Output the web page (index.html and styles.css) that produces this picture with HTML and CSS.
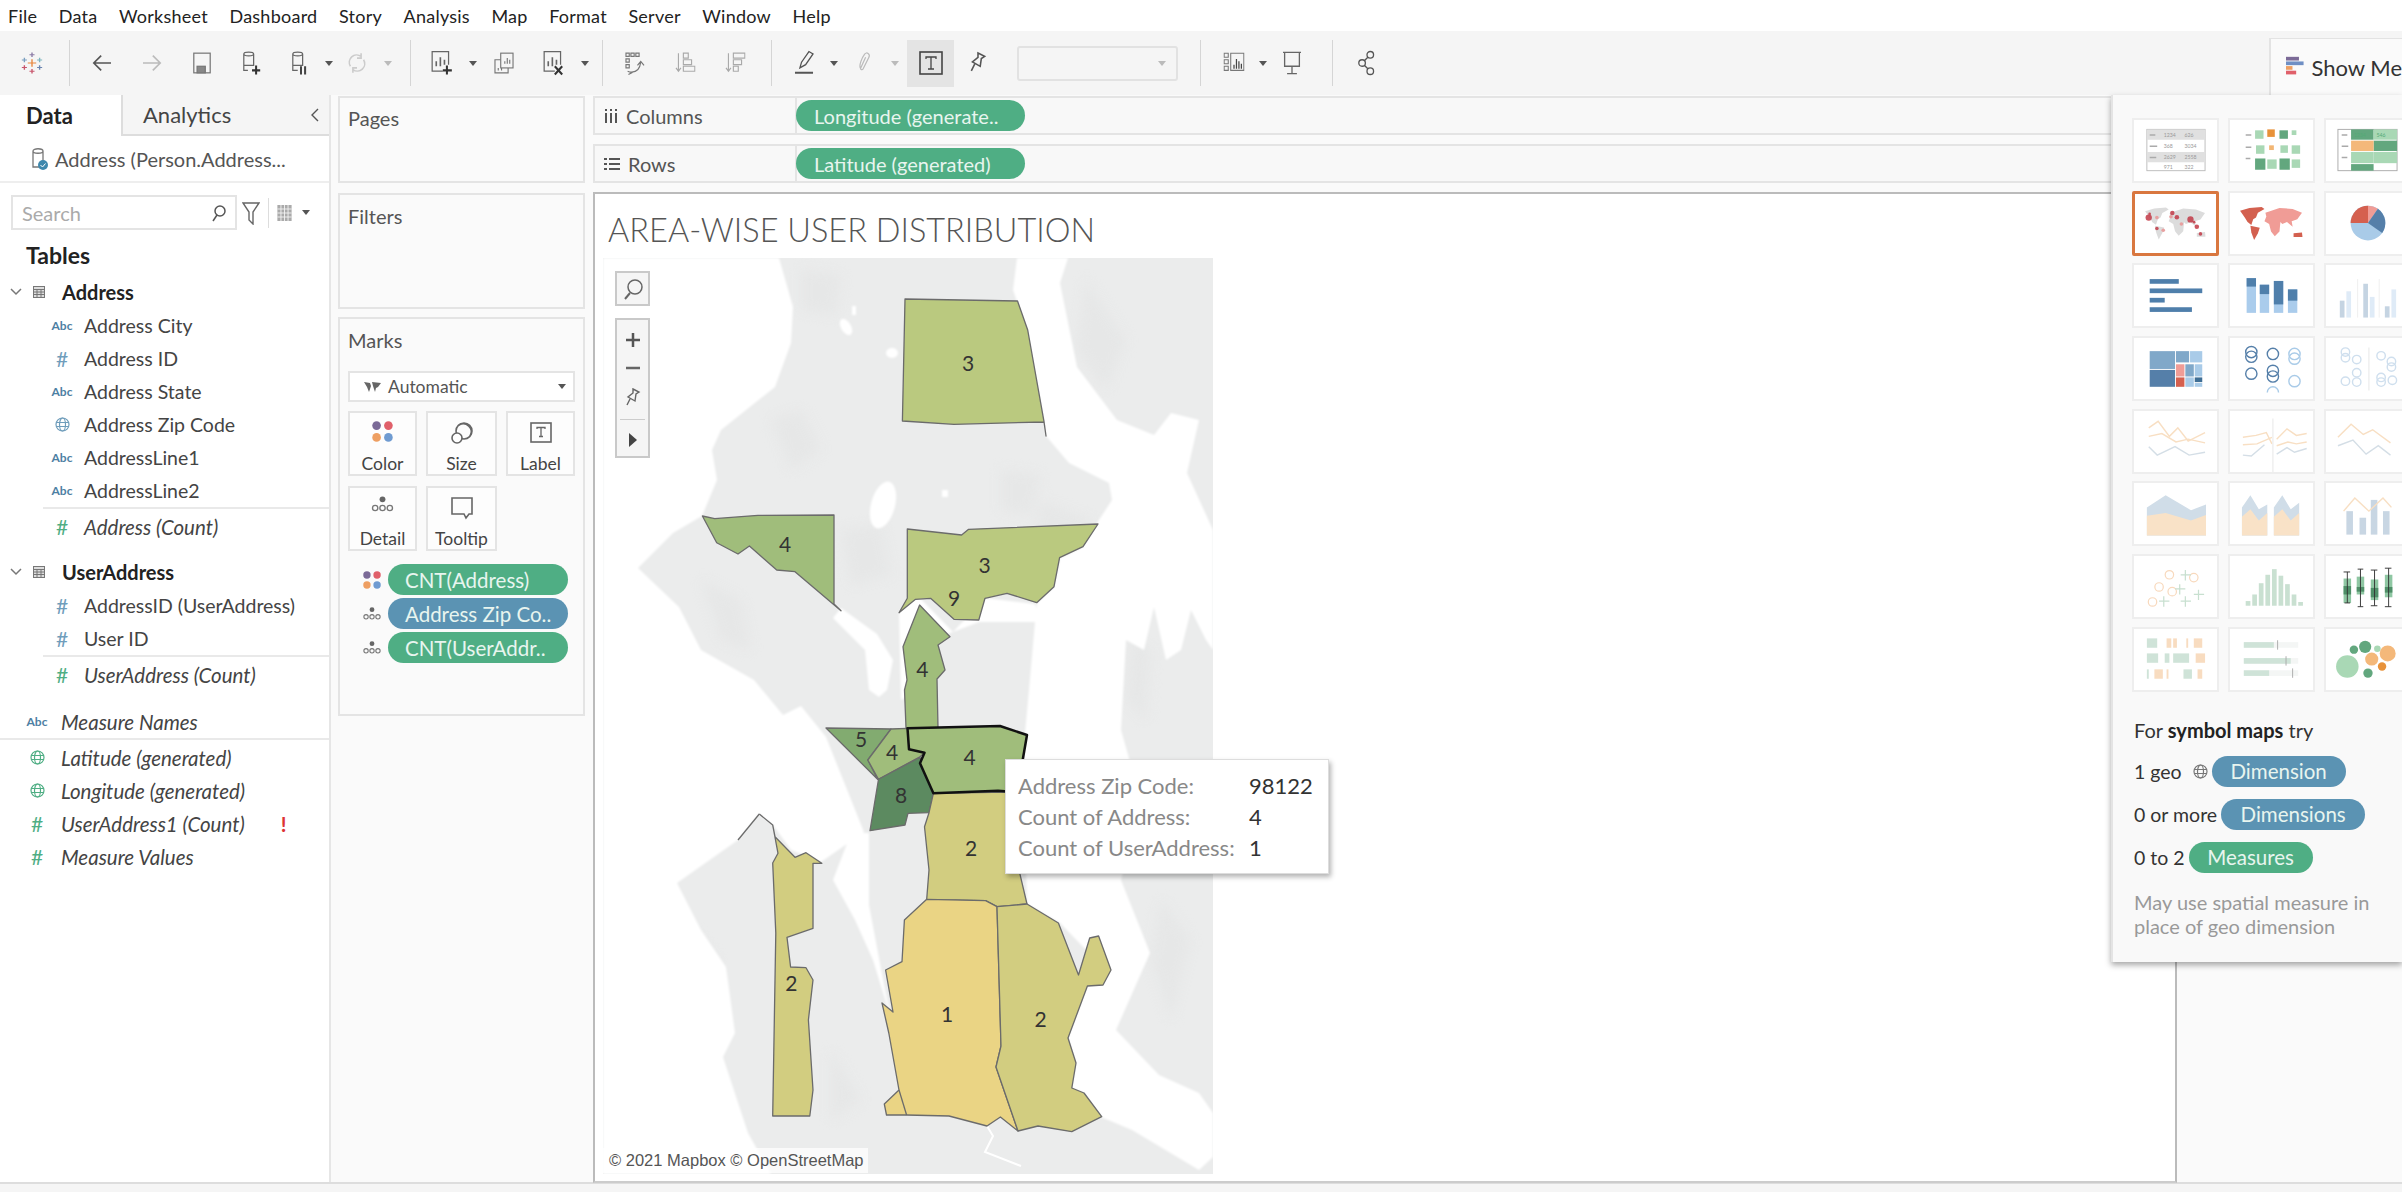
FILE: index.html
```html
<!DOCTYPE html>
<html lang="en">
<head>
<meta charset="utf-8">
<title>Tableau worksheet</title>
<link rel="stylesheet" href="styles.css">
</head>
<body>
<svg class="defs" width="0" height="0">
  <defs>
    <g id="detail"><circle cx="8" cy="2.5" r="2.2" fill="#666"/><g fill="none" stroke="#777"><circle cx="2.5" cy="9" r="2"/><circle cx="8" cy="9" r="2"/><circle cx="13.5" cy="9" r="2"/></g></g>
    <g id="dots"><circle cx="3.5" cy="3.5" r="3.3" fill="#7b6a97"/><circle cx="12.5" cy="3.5" r="3.3" fill="#e0606a"/><circle cx="3.5" cy="12.5" r="3.3" fill="#ee9f62"/><circle cx="12.5" cy="12.5" r="3.3" fill="#6f9bd1"/></g>
    <g id="globe" fill="none" stroke="currentColor" stroke-width="1.2"><circle cx="7.5" cy="7.5" r="6.5"/><ellipse cx="7.5" cy="7.5" rx="3" ry="6.5"/><path d="M1 5.5h13M1 9.5h13"/></g>
    <g id="tbl" fill="none" stroke="#777"><rect x=".5" y=".5" width="11" height="11" fill="#ddd"/><path d="M.5 3.5h11M.5 6h11M.5 8.5h11M4 3.5v8M8 3.5v8"/></g>
    <g id="pin" fill="none" stroke="currentColor" stroke-width="1.4"><path d="M9 1l6 3-3 2-1 7-7-4 5-4zM6 11l-3 6"/></g>
    <path id="na" d="M10 19L20 16 33 15 36 17 29 21 27 26 24 28 22 34 18 31 15 26Z"/>
    <path id="sa" d="M21 35L31 37 29 43 25 50 22 42Z"/>
    <path id="ea" d="M37 21L52 16 66 17 76 21 71 28 65 30 66 36 60 31 55 33 53 31 52 41 47 46 43 41 41 33 36 30 38 25Z"/>
    <path id="au" d="M67 43L76 42 76.500 47 67 47Z"/>
  </defs>
</svg>

<nav class="menubar">
  <span>File</span><span>Data</span><span>Worksheet</span><span>Dashboard</span><span>Story</span><span>Analysis</span><span>Map</span><span>Format</span><span>Server</span><span>Window</span><span>Help</span>
</nav>

<header class="toolbar">
  <div class="tg g1">
    <svg class="logo" width="22" height="24" viewBox="0 0 26 32" preserveAspectRatio="none"><g stroke-width="1.600" fill="none"><path d="M13 11v10M8 16h10" stroke="#e8863d"/><path d="M13 2v6M10 5h6" stroke="#8a7aa5"/><path d="M13 24v6M10 27h6" stroke="#c8546b"/><path d="M4 9v6M1 12h6" stroke="#7a9fc0"/><path d="M22 9v6M19 12h6" stroke="#7fb5c0"/><path d="M4 19v6M1 22h6" stroke="#c8546b"/><path d="M22 19v6M19 22h6" stroke="#6a84b0"/></g></svg>
  </div>
  <div class="tg g2">
    <span class="ti"><svg width="26" height="24" viewBox="0 0 26 24" fill="none" stroke="#555" stroke-width="2"><path d="M24 12H3M12 3l-9 9 9 9"/></svg></span>
    <span class="ti"><svg width="26" height="24" viewBox="0 0 26 24" fill="none" stroke="#bbb" stroke-width="2"><path d="M2 12h21M14 3l9 9-9 9"/></svg></span>
    <span class="ti"><svg width="24" height="28" viewBox="0 0 24 28" fill="none" stroke="#777" stroke-width="1.5"><rect x="2" y="2" width="20" height="24"/><rect x="6" y="18" width="10" height="8" fill="#888"/></svg></span>
    <span class="ti"><svg width="26" height="30" viewBox="0 0 26 30" fill="none" stroke="#666" stroke-width="1.5"><path d="M3 4c0-3 12-3 12 0v14H3zM3 4c0 3 12 3 12 0M8 24H3v-6"/><path d="M18 18v11M13 24h10" stroke="#333" stroke-width="2.5"/></svg></span>
    <span class="ti ti48"><svg width="26" height="30" viewBox="0 0 26 30" fill="none" stroke="#666" stroke-width="1.5"><path d="M3 4c0-3 12-3 12 0v14H3zM3 4c0 3 12 3 12 0M9 24H3v-6"/><path d="M13 19v10M18 19v10" stroke="#444" stroke-width="2.5"/></svg></span>
    <span class="dd dd8"></span>
    <span class="ti ti48"><svg width="24" height="28" viewBox="0 0 24 28" fill="none" stroke="#ccc" stroke-width="2"><path d="M4 18A9 9 0 0 1 17 6M20 10a9 9 0 0 1-13 12M17 2v6h-5M7 26v-6h5"/></svg></span>
    <span class="dd dd14 off"></span>
  </div>
  <div class="tg g3">
    <span class="ti"><svg width="28" height="32" viewBox="0 0 28 32" fill="none" stroke="#666" stroke-width="1.5"><path d="M15 26H2V2h20v16"/><path d="M7 20v-6M12 20V9M17 18v-6" stroke-width="2"/><path d="M20 19v11M15 25h11" stroke="#333" stroke-width="2.5"/></svg></span>
    <span class="dd dd12"></span>
    <span class="ti"><svg width="26" height="28" viewBox="0 0 26 28" fill="none" stroke="#777" stroke-width="1.4"><rect x="9" y="2" width="15" height="18"/><path d="M9 10H2v16h16v-6"/><path d="M14 15v-3M17 15V8M20 15v-5M6 23v-3M10 23v-3"/></svg></span>
    <span class="ti"><svg width="28" height="32" viewBox="0 0 28 32" fill="none" stroke="#666" stroke-width="1.5"><path d="M15 26H2V2h20v16"/><path d="M7 20v-6M12 20V9M17 18v-6" stroke-width="2"/><path d="M15 20l9 10M24 20l-9 10" stroke="#333" stroke-width="2.5"/></svg></span>
    <span class="dd dd12"></span>
  </div>
  <div class="tg g4">
    <span class="ti"><svg width="26" height="30" viewBox="0 0 26 30" fill="none" stroke="#777" stroke-width="1.4"><path d="M2 3h4v4H2zM8 3h4v4H8zM14 3h4v4h-4zM2 10h4v4H2zM2 17h4v4H2zM7 26c8 1 12-4 13-12M16 18l4-5 4 5M4 25l5 2-4 2"/></svg></span>
    <span class="ti"><svg width="26" height="30" viewBox="0 0 26 30" fill="none" stroke="#aaa" stroke-width="1.4"><path d="M5 3v22M2 21l3 4 3-4M11 3h6v6h-6zM11 11h10v6H11zM11 19h14v6H11z"/></svg></span>
    <span class="ti"><svg width="26" height="30" viewBox="0 0 26 30" fill="none" stroke="#aaa" stroke-width="1.4"><path d="M5 3v22M2 21l3 4 3-4M11 3h14v6H11zM11 11h10v6H11zM11 19h6v6h-6z"/></svg></span>
  </div>
  <div class="tg g5">
    <span class="ti"><svg width="26" height="32" viewBox="0 0 26 32" fill="none" stroke="#555" stroke-width="1.6"><path d="M8 22l2-7 9-13 5 3-9 13z"/><path d="M2 28h22" stroke-width="2.4"/></svg></span>
    <span class="dd dd10"></span>
    <span class="ti"><svg width="18" height="30" viewBox="0 0 18 30" fill="none" stroke="#bbb" stroke-width="1.5"><path d="M5 22c-3-4 2-14 5-18 2-3 7 0 5 4l-7 14c-1 2-4 1-3-1l6-13"/></svg></span>
    <span class="dd dd12 off"></span>
    <span class="tbtn"><svg width="24" height="26" viewBox="0 0 24 26" fill="none" stroke="#444" stroke-width="1.6"><rect x="1" y="2" width="22" height="22"/><path d="M7 9V7h10v2M12 7v12M9 19h6" stroke-width="1.3"/></svg></span>
    <span class="tpin"><svg width="20" height="30" viewBox="0 0 18 20" color="#555"><use href="#pin"/></svg></span>
    <span class="tselect"><i class="dd dd8 off"></i></span>
  </div>
  <div class="tg g6">
    <span class="ti"><svg width="26" height="28" viewBox="0 0 26 28" fill="none" stroke="#777" stroke-width="1.3"><path d="M1 2h5v5H1zM1 10h5v5H1zM1 18h5v5H1zM9 2h16v21H9z"/><path d="M13 21v-5M16 21V9M19 21v-9M22 21v-6" stroke="#444" stroke-width="1.5"/></svg></span>
    <span class="dd dd8"></span>
    <span class="ti"><svg width="24" height="30" viewBox="0 0 24 30" fill="none" stroke="#666" stroke-width="1.6"><path d="M1 2h22M3 2v17h18V2M12 19v9M6 28h12"/></svg></span>
  </div>
  <div class="tg g7">
    <span class="ti"><svg width="22" height="32" viewBox="0 0 22 32" fill="none" stroke="#555" stroke-width="1.6"><circle cx="15" cy="6" r="4"/><circle cx="5" cy="16" r="4"/><circle cx="15" cy="26" r="4"/><path d="M12 9l-4 4M8 19l4 4"/></svg></span>
  </div>
  <div class="showtab">
    <svg width="20" height="22" viewBox="0 0 20 22"><rect width="14" height="4" fill="#7b6a97"/><rect y="5" width="19" height="4" fill="#6f8fc4"/><rect y="10" width="7" height="4" fill="#ee9f62"/><rect y="15" width="11" height="4" fill="#e0606a"/></svg>
    <span>Show Me</span>
  </div>
</header>

<main class="main">
  <aside class="left">
    <div class="tabs">
      <div class="tab tab-on">Data</div>
      <div class="tab tab-off">Analytics<svg class="chev" width="8" height="14" viewBox="0 0 8 14" fill="none" stroke="#555" stroke-width="1.4"><path d="M7 1L1 7l6 6"/></svg></div>
    </div>
    <div class="source">
      <svg width="18" height="24" viewBox="0 0 18 24"><g fill="none" stroke="#777" stroke-width="1.3"><path d="M2 4c0-3 10-3 10 0v16H2zM2 4c0 3 10 3 10 0"/></g><circle cx="12" cy="18" r="5" fill="#3f88ad"/><path d="M9.500 18l2 2 3-3.500" stroke="#fff" fill="none"/></svg>
      <span>Address (Person.Address...</span>
    </div>
    <div class="searchrow">
      <div class="search"><span>Search</span><svg width="14" height="18" viewBox="0 0 14 18" fill="none" stroke="#555" stroke-width="1.5"><circle cx="8" cy="7" r="5"/><path d="M5 11l-4 6"/></svg></div>
      <svg class="funnel" width="18" height="24" viewBox="0 0 18 24" fill="none" stroke="#666" stroke-width="1.4"><path d="M1 2h16l-6 9v12l-4-4v-8z"/></svg>
      <i class="vsep"></i>
      <svg class="gridic" width="15" height="16" viewBox="0 0 16 18"><path d="M0 0h16v18H0z" fill="#aaa"/><path d="M4 0v18M8 0v18M12 0v18M0 4.500h16M0 9h16M0 13.500h16" stroke="#f4f4f4"/></svg>
      <i class="ddg"></i>
    </div>
    <h2 class="tables">Tables</h2>

    <div class="group"><svg width="12" height="8" viewBox="0 0 12 8" fill="none" stroke="#777" stroke-width="1.5"><path d="M1 1l5 5 5-5"/></svg><svg width="12" height="12" viewBox="0 0 12 12"><use href="#tbl"/></svg><b>Address</b></div>
    <div class="field"><i class="ic abc">Abc</i>Address City</div>
    <div class="field"><i class="ic hash">#</i>Address ID</div>
    <div class="field"><i class="ic abc">Abc</i>Address State</div>
    <div class="field"><i class="ic glb"><svg width="15" height="15" viewBox="0 0 15 15"><use href="#globe"/></svg></i>Address Zip Code</div>
    <div class="field"><i class="ic abc">Abc</i>AddressLine1</div>
    <div class="field"><i class="ic abc">Abc</i>AddressLine2</div>
    <hr class="rule">
    <div class="field em"><i class="ic hash grn">#</i>Address (Count)</div>

    <div class="group g-second"><svg width="12" height="8" viewBox="0 0 12 8" fill="none" stroke="#777" stroke-width="1.5"><path d="M1 1l5 5 5-5"/></svg><svg width="12" height="12" viewBox="0 0 12 12"><use href="#tbl"/></svg><b>UserAddress</b></div>
    <div class="field"><i class="ic hash">#</i>AddressID (UserAddress)</div>
    <div class="field"><i class="ic hash">#</i>User ID</div>
    <hr class="rule">
    <div class="field em"><i class="ic hash grn">#</i>UserAddress (Count)</div>

    <div class="field em mfield mfirst"><i class="ic abc">Abc</i>Measure Names</div>
    <hr class="rule rule-m">
    <div class="field em mfield"><i class="ic glb grn"><svg width="15" height="15" viewBox="0 0 15 15"><use href="#globe"/></svg></i>Latitude (generated)</div>
    <div class="field em mfield"><i class="ic glb grn"><svg width="15" height="15" viewBox="0 0 15 15"><use href="#globe"/></svg></i>Longitude (generated)</div>
    <div class="field em mfield"><i class="ic hash grn">#</i>UserAddress1 (Count)<b class="bang">!</b></div>
    <div class="field em mfield"><i class="ic hash grn">#</i>Measure Values</div>
  </aside>

  <section class="cards">
    <div class="card pages"><h3>Pages</h3></div>
    <div class="card filters"><h3>Filters</h3></div>
    <div class="card marks">
      <h3>Marks</h3>
      <div class="marktype">
        <svg width="18" height="12" viewBox="0 0 18 12" fill="#666"><path d="M0 1l6 1 1 3-2 6-2-5zM8 1l9 1-3 4-2 1-1 4-2-6z"/></svg>
        <span>Automatic</span><i class="ddg"></i>
      </div>
      <div class="mbtns">
        <div class="mbtn"><svg width="21" height="21" viewBox="0 0 16 16"><use href="#dots"/></svg><span>Color</span></div>
        <div class="mbtn"><svg width="24" height="24" viewBox="0 0 24 24" fill="none" stroke="#666" stroke-width="1.6"><circle cx="14" cy="10" r="8"/><circle cx="7" cy="17" r="5" fill="#fff"/><path d="M9 4a8 8 0 0 1 11 11"/></svg><span>Size</span></div>
        <div class="mbtn"><svg width="24" height="24" viewBox="0 0 24 24" fill="none" stroke="#666" stroke-width="1.6"><rect x="2" y="2" width="20" height="19"/><path d="M8 8V6.500h8V8M12 6.500v9M10 15.500h4" stroke-width="1.300"/></svg><span>Label</span></div>
        <div class="mbtn"><svg width="25" height="16" viewBox="0 0 16 12"><use href="#detail"/></svg><span>Detail</span></div>
        <div class="mbtn"><svg width="24" height="24" viewBox="0 0 24 24" fill="none" stroke="#666" stroke-width="1.6"><path d="M2 2h20v16h-3l-3 4-2-4H2z"/></svg><span>Tooltip</span></div>
      </div>
      <div class="mpills">
        <div class="mrow"><svg width="18" height="18" viewBox="0 0 16 16"><use href="#dots"/></svg><span class="pill green">CNT(Address)</span></div>
        <div class="mrow"><svg width="18" height="13" viewBox="0 0 16 12"><use href="#detail"/></svg><span class="pill blue">Address Zip Co..</span></div>
        <div class="mrow"><svg width="18" height="13" viewBox="0 0 16 12"><use href="#detail"/></svg><span class="pill green">CNT(UserAddr..</span></div>
      </div>
    </div>
  </section>

  <section class="work">
    <div class="shelf"><div class="shelf-l"><svg width="14" height="14" viewBox="0 0 14 14" stroke="#555" stroke-width="2"><path d="M2 4v10M7 4v10M12 4v10M2 0v2M7 0v2M12 0v2"/></svg>Columns</div><span class="pill green shelfpill">Longitude (generate..</span></div>
    <div class="shelf"><div class="shelf-l"><svg width="16" height="14" viewBox="0 0 16 14" stroke="#555" stroke-width="2"><path d="M5 2h11M5 7h11M5 12h11M0 2h3M0 7h3M0 12h3"/></svg>Rows</div><span class="pill green shelfpill">Latitude (generated)</span></div>
    <div class="view">
      <h1>AREA-WISE USER DISTRIBUTION</h1>
      <div class="map">
        <svg class="mapsvg" width="610" height="916" viewBox="602 258 610 916">
          <rect x="602" y="258" width="610" height="916" fill="#ebecec"/>
          <g class="blotch" fill="#e6e7e7">
            <path d="M800 270l40 5-5 40-35-5zM770 420l30-10 20 40-30 20zM1085 280l40 60-20 50-30-40zM1040 500l50 20-20 50-40-20zM840 530l40-5 10 50-40 10zM700 580l40 20 10 50-30-10zM1000 470l40 5-10 40-30-5zM690 930l25 30-5 40-20-30zM1160 900l30 40-20 80-20-60zM830 1050l30 50-30 20zM1130 640l20 10-5 70-20-20z"/>
          </g>
          <g class="land" fill="#fff">
            <path d="M602 258H778L792 307 790 343 774 387 720 430 711 450 716 480 701 516 672 533 637 568 678 607 700 650 753 680 782 715 800 706 825 737 863 832 820 862 790 850 772 825 758 814 737 840 676 883 700 930 725 967 734 1033 722 1057 747 1133 770 1174H602Z"/>
            <path d="M1016 258L1012 290 1026 330 1043 422 1045 436 1068 463 1108 483 1111 500 1096 523 1082 547 1059 558 1053 587 1036 603 1034 622 1028 690 1024 733 1022 780 1026 904 1059 923 1090 955 1109 967 1086 987 1067 1038 1075 1063 1071 1088 1083 1093 1100 1117 1131 1130 1198 1170 1212 1157V1113L1198 1093 1158 1075 1115 1030 1149 953 1120 880 1140 800 1120 730 1125 640 1143 650 1153 607 1165 660 1180 650 1190 610 1205 640 1212 650V530L1186 473 1198 420 1170 413 1153 435 1116 420 1076 367 1059 283 1067 258Z"/>
            <path d="M840 608L876 634 892 660 886 690 878 697 868 690 864 650 832 618ZM898 612L916 595 952 632 978 622 1040 622 1034 604 984 598 952 632 930 640 920 690 900 700Z"/>
            <path d="M832 880L850 833 868 833 868 905 884 990 892 1025 872 960 854 920Z"/>
            <ellipse cx="882" cy="505" rx="12" ry="24" transform="rotate(15 882 505)"/>
            <ellipse cx="845" cy="327" rx="5" ry="9" transform="rotate(-30 845 327)"/>
            <ellipse cx="891" cy="353" rx="6" ry="5"/>
            <rect x="941" y="490" width="6" height="7"/>
            <rect x="851" y="306" width="4" height="9"/>
          </g>
          <path d="M986 1126l6 10-8 16 36 14" fill="none" stroke="#fff" stroke-width="2"/>
          <g stroke="#6b6b6b" stroke-width="1.300" stroke-linejoin="round">
            <path fill="#bac97f" d="M904 299L1016.500 301 1026.700 330 1043 421.700 1045 436 1043 422 953 424.300 901.400 421Z"/>
            <path fill="#a0bd7b" d="M701.400 516L713.700 518.700 757 515.300 833 515 833 604 840 610.700 794 571.700 775.700 570 748.400 546 737 554 715.700 542.700Z"/>
            <path fill="#bac97f" d="M906.300 529L960.600 535 967.600 529.300 1097 524 1082 546.700 1058.600 557.700 1053 586.700 1035.700 602.700 1006 593.300 984 598.300 977.800 620 953 619.300 929.600 598.300 914.500 599.300 898 612.700 906.300 598.300Z"/>
            <path fill="#a0bd7b" d="M918.600 605L949 636.700 937 645 944 670 936 679 937 728 905 728 903.500 690 906 680 902 646.700Z"/>
            <path fill="#82ab70" d="M825 728L890 729 866.800 760 876.600 779.300Z"/>
            <path fill="#a0bd7b" d="M890 729L906.500 728.300 908 749.300 923.500 752.700 919 756.700 877.500 779.300 866.800 760Z"/>
            <path fill="#5c8a60" d="M919 757.300L932.400 793.300 928 812.700 907 813.300 904 825 869 830.700 877.500 779.300Z"/>
            <path fill="#d2cd80" d="M932.400 793.300L1006 792 1018.600 872.700 1026 904 996 906.700 984.600 900.700 925.700 899.300 928 870 923.500 826.700 928 812.700Z"/>
            <path fill="#ead484" d="M925.700 899.300L984.600 900.700 996 906.700 1000 1046 995 1067 1017 1131 999.400 1117 986 1126 948 1116 905.600 1115 885.500 1115 883.300 1104 898 1090 887.800 1033 881 1003 892 1012 884.600 970 901 961.700 903.400 920Z"/>
            <path fill="none" d="M898 1090L905.600 1115"/>
            <path fill="#d2cd80" d="M996 906.700L1026 904 1057.400 923 1077.500 975 1088.700 938 1097.600 936 1110 970 1102 985 1086.400 986 1067 1038 1075 1063 1070.800 1088 1083 1093 1100.700 1116.700 1070.800 1131.700 1037 1126 1017 1131 995 1067 1000 1046Z"/>
            <path fill="#d2cd80" d="M758.300 814L771.700 825 774 836.700 794 857.300 805 852.700 820.800 863.300 812 863.300 812 928.300 786 937.300 789.600 967 805 967.700 812 980 807.400 1020 812 1090 808.800 1116 771.700 1116 774.800 933 771.700 863 777 853.300 771.700 825"/>
            <path fill="none" d="M737 840L758.300 814"/>
          </g>
          <path fill="#a0bd7b" stroke="#111" stroke-width="2.500" stroke-linejoin="round" d="M906.500 728.300L999 726 1026 735 1021.700 760 1014 792 997 790.700 932.400 793.300 919 763.300 923.500 752.700 908 749.300Z"/>
          <g class="nums" text-anchor="middle">
            <text x="967" y="371">3</text><text x="784" y="552">4</text><text x="983.500" y="573">3</text><text x="953" y="606">9</text><text x="921.400" y="677">4</text><text x="860" y="747">5</text><text x="891" y="760">4</text><text x="968.600" y="765">4</text><text x="900" y="803">8</text><text x="970" y="856">2</text><text x="790.400" y="991">2</text><text x="946" y="1022">1</text><text x="1039.500" y="1027">2</text>
          </g>
        </svg>
        <div class="mapctl">
          <div class="ctl ctl-s"><svg width="20" height="22" viewBox="0 0 20 22" fill="none" stroke="#666" stroke-width="1.500"><circle cx="12" cy="9" r="7"/><path d="M7 15l-5 6" stroke-width="2"/></svg></div>
          <div class="ctl ctl-z">
            <svg width="16" height="16" viewBox="0 0 16 16" stroke="#555" stroke-width="2.500"><path d="M8 1v14M1 8h14"/></svg>
            <svg width="14" height="16" viewBox="0 0 14 16" stroke="#666" stroke-width="2.500"><path d="M0 8h14"/></svg>
            <svg width="18" height="20" viewBox="0 0 18 20" color="#666"><use href="#pin"/></svg>
            <i class="ctlrule"></i>
            <svg width="10" height="16" viewBox="0 0 10 16" fill="#444"><path d="M1 1l8 7-8 7z"/></svg>
          </div>
        </div>
        <div class="attr">© 2021 Mapbox © OpenStreetMap</div>
      </div>
      <div class="tooltip">
        <span>Address Zip Code:</span><b>98122</b>
        <span>Count of Address:</span><b>4</b>
        <span>Count of UserAddress:</span><b>1</b>
      </div>
    </div>
  </section>

  <aside class="showme">
    <div class="thumbs">
      <div class="th"><svg viewBox="0 0 87 65"><rect x="13" y="10" width="62" height="44" fill="#fff" stroke="#bbb"/><path d="M13 10h62v11H13zM13 34h62v11H13z" fill="#e0e0e0"/><path d="M16 16h6M16 28h8M16 40h7" stroke="#aaa" stroke-width="1.500"/><g class="tt" fill="#999"><text x="31" y="18">1234</text><text x="53" y="18">626</text><text x="31" y="30">368</text><text x="53" y="30">3034</text><text x="31" y="42">2629</text><text x="53" y="42">2558</text><text x="31" y="52">971</text><text x="53" y="52">322</text></g></svg></div>
      <div class="th"><svg viewBox="0 0 87 65"><path d="M16 16h6M16 29h6M16 41h5" stroke="#aaa" stroke-width="1.500"/><g fill="#a9d8b5"><rect x="26" y="11" width="9" height="9"/><rect x="27" y="27" width="9" height="9"/><rect x="53" y="27" width="8" height="8"/><rect x="65" y="27" width="9" height="9"/><rect x="39" y="42" width="10" height="10"/><rect x="65" y="42" width="9" height="9"/><rect x="65" y="11" width="5" height="5"/></g><g fill="#62a77e"><rect x="52" y="11" width="9" height="9"/><rect x="26" y="41" width="11" height="12"/><rect x="52" y="41" width="11" height="12"/></g><rect x="39" y="10" width="8" height="8" fill="#e8923a"/><rect x="41" y="27" width="5" height="5" fill="#f2b674"/></svg></div>
      <div class="th"><svg viewBox="0 0 87 65"><rect x="12" y="10" width="63" height="44" fill="#fff" stroke="#aaa"/><path d="M16 16h6M16 28h7M16 40h6" stroke="#aaa" stroke-width="1.500"/><g fill="#62a77e"><rect x="26" y="10" width="24" height="11"/><rect x="50" y="22" width="25" height="11"/><rect x="26" y="47" width="24" height="7"/></g><g fill="#a9d8b5"><rect x="50" y="10" width="25" height="11"/><rect x="26" y="34" width="24" height="12"/><rect x="50" y="34" width="25" height="12"/></g><rect x="26" y="22" width="24" height="11" fill="#f4b87a"/><g class="tt" fill="#5a7"><text x="29" y="18">1234</text><text x="53" y="18">546</text></g></svg></div>

      <div class="th th-on"><svg viewBox="0 0 87 65"><g fill="#dcdcdc"><use href="#na"/><use href="#sa"/><use href="#ea"/><use href="#au"/></g><g fill="#c23a47" opacity=".85"><circle cx="14" cy="26" r="3.500"/><circle cx="40" cy="21" r="2.500"/><circle cx="45" cy="25.600" r="2.500"/><circle cx="60" cy="28" r="3.500"/><circle cx="67" cy="36" r="2.500"/><circle cx="23" cy="38" r="2"/><circle cx="71" cy="44" r="2"/><circle cx="15" cy="22" r="1.500"/><circle cx="64" cy="31" r="1.500"/></g><g fill="#e8a0a0"><circle cx="23" cy="26" r="2"/><circle cx="30" cy="40" r="2"/><circle cx="50" cy="33" r="2"/><circle cx="38.500" cy="25" r="2"/></g></svg></div>
      <div class="th"><svg viewBox="0 0 87 65"><g fill="#d3604f"><use href="#na"/><use href="#sa"/><use href="#au"/></g><use href="#ea" fill="#f09c96"/></svg></div>
      <div class="th"><svg viewBox="0 0 87 65"><circle cx="44" cy="32" r="18.500" fill="#a9cbe8"/><path d="M44 32H25.500A18.500 18.500 0 0 1 44 13.500Z" fill="#d5604f"/><path d="M44 32V13.500A18.500 18.500 0 0 1 54.600 16.800Z" fill="#f09c96"/><path d="M44 32L54.600 16.800A18.500 18.500 0 0 1 59.200 42.600Z" fill="#557fa9"/></svg></div>

      <div class="th"><svg viewBox="0 0 87 65" fill="#4f7fab"><rect x="16" y="15" width="31" height="5"/><rect x="16" y="25" width="56" height="5"/><rect x="16" y="35" width="16" height="5"/><rect x="16" y="45" width="45" height="5"/></svg></div>
      <div class="th"><svg viewBox="0 0 87 65"><g fill="#aaccec"><rect x="17" y="14" width="10" height="37"/><rect x="31" y="21" width="10" height="30"/><rect x="46" y="17" width="10" height="34"/><rect x="61" y="26" width="10" height="25"/></g><g fill="#4f7fab"><rect x="17" y="14" width="10" height="9"/><rect x="31" y="21" width="10" height="10"/><rect x="46" y="17" width="10" height="25"/><rect x="61" y="26" width="10" height="12"/></g></svg></div>
      <div class="th"><svg viewBox="0 0 87 65"><g fill="#c5d4e2"><rect x="14" y="38" width="5" height="18"/><rect x="39" y="20" width="5" height="36"/><rect x="62" y="44" width="5" height="12"/></g><g fill="#dfebf7"><rect x="21" y="28" width="5" height="28"/><rect x="46" y="34" width="5" height="22"/><rect x="69" y="26" width="5" height="30"/></g><path d="M33 15v41M56 15v41" stroke="#eee"/></svg></div>

      <div class="th"><svg viewBox="0 0 87 65"><rect x="16" y="14" width="27" height="19" fill="#80a8c9"/><rect x="16" y="34" width="27" height="18" fill="#557fa9"/><rect x="44" y="14" width="14" height="12" fill="#80a8c9"/><rect x="59" y="14" width="13" height="12" fill="#a9cbe8"/><rect x="44" y="28" width="9" height="13" fill="#f09c96"/><rect x="44" y="42" width="9" height="10" fill="#d5604f"/><rect x="54" y="28" width="9" height="13" fill="#80a8c9"/><rect x="64" y="28" width="8" height="13" fill="#a9cbe8"/><rect x="54" y="42" width="9" height="10" fill="#a9cbe8"/><rect x="64" y="42" width="8" height="5" fill="#3f6e95"/><rect x="64" y="48" width="8" height="4" fill="#a9cbe8"/></svg></div>
      <div class="th"><svg viewBox="0 0 87 65" fill="none" stroke-width="1.500"><g stroke="#557fa9"><circle cx="22" cy="15" r="6"/><circle cx="22" cy="20" r="6"/><circle cx="22" cy="38" r="6"/><circle cx="45" cy="17" r="6"/><circle cx="45" cy="35" r="6"/><circle cx="45" cy="41" r="6"/></g><g stroke="#a9cbe8"><circle cx="68" cy="17" r="6"/><circle cx="68" cy="22" r="6"/><circle cx="68" cy="46" r="6"/><path d="M39 58a6 6 0 0 1 12 0"/></g></svg></div>
      <div class="th"><svg viewBox="0 0 87 65" fill="none" stroke="#cfdfee" stroke-width="1.500"><circle cx="20" cy="15" r="4.500"/><circle cx="20" cy="21" r="4.500"/><circle cx="32" cy="23" r="4.500"/><circle cx="32" cy="47" r="4.500"/><circle cx="20" cy="46" r="4.500"/><circle cx="32" cy="37" r="4.500"/><path d="M45 10v46" stroke="#eee"/><circle cx="58" cy="19" r="4.500"/><circle cx="69" cy="25" r="4.500"/><circle cx="69" cy="31" r="4.500"/><circle cx="58" cy="42" r="4.500"/><circle cx="58" cy="47" r="4.500"/><circle cx="70" cy="45" r="4.500"/></svg></div>

      <div class="th"><svg viewBox="0 0 87 65" fill="none" stroke-width="1.500"><path d="M15 18l10-7 12 16 9-9 11 14 18-9" stroke="#f8dfc3"/><path d="M15 27l14-3 15 9 13-3 18 4" stroke="#f8dfc3"/><path d="M15 38l9 9 19-9 15 9 17-3" stroke="#d4dee6"/></svg></div>
      <div class="th"><svg viewBox="0 0 87 65" fill="none" stroke-width="1.500"><path d="M13 28l14-2 11-3 6 12" stroke="#f8dfc3"/><path d="M13 36l15-1 16-7" stroke="#f8dfc3"/><path d="M13 47l9 1 14-12" stroke="#d4dee6"/><path d="M45 8v58" stroke="#eee"/><path d="M49 30l11-11 10 7 11-2M49 37l12-4 9 2 11-2" stroke="#f8dfc3"/><path d="M49 46l11-7 8 5 13-4" stroke="#d4dee6"/></svg></div>
      <div class="th"><svg viewBox="0 0 87 65" fill="none" stroke-width="1.500"><path d="M12 28l14-14 13 11 10-5 19 14" stroke="#f8dfc3"/><path d="M12 37l16-6 14 15 13-9 13 10" stroke="#d4dee6"/></svg></div>

      <div class="th"><svg viewBox="0 0 87 65"><path d="M13 26L33 13l27 16 16-6v33H13z" fill="#d0dde8"/><path d="M13 35l20-3 27 8 16-6v22H13z" fill="#f9e2c7"/></svg></div>
      <div class="th"><svg viewBox="0 0 87 65"><path d="M12 26l9-13 9 15 9-5v33H12zM46 26l9-13 9 15 9-7 0 35H46z" fill="#d0dde8"/><path d="M12 36l9-8 9 12 9-8v24H12zM46 36l9-8 9 12 9-8v24H46z" fill="#f9e2c7"/></svg></div>
      <div class="th"><svg viewBox="0 0 87 65" fill="#c8d6e3"><rect x="21" y="30" width="7" height="25"/><rect x="35" y="37" width="7" height="18"/><rect x="47" y="18" width="7" height="37"/><rect x="60" y="30" width="7" height="25"/><path d="M18 30l12-14 15 14 15-14 9 10" fill="none" stroke="#f8dfc3" stroke-width="1.500"/></svg></div>

      <div class="th"><svg viewBox="0 0 87 65" fill="none" stroke-width="1.300"><g stroke="#f8d9bd"><circle cx="37" cy="20" r="4.500"/><circle cx="26" cy="33" r="4.500"/><circle cx="40" cy="38" r="4.500"/><circle cx="63" cy="23" r="4.500"/><circle cx="19" cy="49" r="4.500"/></g><path d="M54 15v11M49 20h11M48 30v11M43 35h11M68 36v11M63 41h11M31 43v11M26 48h11M54 43v11M49 48h11" stroke="#c8e0d0"/></svg></div>
      <div class="th"><svg viewBox="0 0 87 65" fill="#c9e0d1"><rect x="16" y="48" width="5" height="5"/><rect x="23" y="41" width="5" height="12"/><rect x="30" y="29" width="5" height="24"/><rect x="37" y="20" width="5" height="33"/><rect x="44" y="14" width="5" height="39"/><rect x="51" y="21" width="5" height="32"/><rect x="58" y="30" width="5" height="23"/><rect x="65" y="41" width="5" height="12"/><rect x="72" y="49" width="5" height="4"/></svg></div>
      <div class="th"><svg viewBox="0 0 87 65"><g fill="#8fc7a3"><rect x="18" y="24" width="8" height="26"/><rect x="32" y="22" width="8" height="19"/><rect x="47" y="25" width="8" height="22"/><rect x="62" y="20" width="8" height="24"/></g><g fill="#4f8f68"><rect x="18" y="32" width="8" height="9"/><rect x="32" y="33" width="8" height="5"/><rect x="47" y="34" width="8" height="10"/><rect x="62" y="33" width="8" height="6"/></g><path d="M22 17v33M18 17h7M19 50h6M36 14v40M33 14h6M33 54h6M51 15v38M47 15h7M47 53h7M66 13v41M62 13h7M62 54h7" stroke="#333" stroke-width="1"/></svg></div>

      <div class="th"><svg viewBox="0 0 87 65"><g fill="#cfe3d8"><rect x="13" y="10" width="11" height="10"/><rect x="13" y="26" width="12" height="10"/><rect x="32" y="26" width="5" height="10"/><rect x="41" y="26" width="17" height="10"/><rect x="13" y="43" width="2" height="10"/><rect x="52" y="43" width="9" height="10"/></g><g fill="#f8dcc0"><rect x="34" y="10" width="5" height="10"/><rect x="41" y="10" width="4" height="10"/><rect x="55" y="10" width="2" height="10"/><rect x="63" y="10" width="9" height="10"/><rect x="65" y="26" width="10" height="10"/><rect x="21" y="43" width="9" height="10"/><rect x="34" y="43" width="2" height="10"/><rect x="67" y="43" width="5" height="10"/></g></svg></div>
      <div class="th"><svg viewBox="0 0 87 65"><rect x="14" y="14" width="58" height="6" fill="#f4f6f5"/><rect x="14" y="31" width="58" height="6" fill="#f4f6f5"/><rect x="14" y="44" width="58" height="6" fill="#f4f6f5"/><g fill="#cfe3d8"><rect x="14" y="14" width="32" height="6"/><rect x="14" y="31" width="50" height="6"/><rect x="14" y="44" width="27" height="6"/></g><path d="M50 12v10M59 29v10M66 42v10" stroke="#aaa"/></svg></div>
      <div class="th"><svg viewBox="0 0 87 65"><circle cx="22" cy="40" r="12" fill="#a9d8b5"/><circle cx="29" cy="22" r="4.500" fill="#62a77e"/><circle cx="41" cy="19" r="6.500" fill="#62a77e"/><circle cx="54" cy="21" r="3.500" fill="#a9d8b5"/><circle cx="48" cy="32" r="7" fill="#f4b87a"/><circle cx="65" cy="26" r="8.500" fill="#f4b87a"/><circle cx="59" cy="40" r="4.500" fill="#e8923a"/><circle cx="44" cy="47" r="5" fill="#62a77e"/></svg></div>
    </div>
    <div class="hint">
      <p class="h1">For <b>symbol maps</b> try</p>
      <p class="hrow">1 geo<svg width="15" height="15" viewBox="0 0 15 15" color="#777"><use href="#globe"/></svg><span class="pill blue hp hp1">Dimension</span></p>
      <p class="hrow">0 or more<span class="pill blue hp hp2">Dimensions</span></p>
      <p class="hrow">0 to 2<span class="pill green hp hp3">Measures</span></p>
      <p class="note">May use spatial measure in<br>place of geo dimension</p>
    </div>
  </aside>
</main>
<div class="foot"></div>
</body>
</html>
```

FILE: styles.css
```css
* { box-sizing: border-box; }
html, body { margin: 0; padding: 0; }
body {
  width: 2402px; height: 1192px; overflow: hidden; position: relative;
  background: #fff; color: #333;
  font-family: "Lato", "Liberation Sans", sans-serif; font-size: 20px;
}
.defs { position: absolute; }
h1, h2, h3, p, hr { margin: 0; }
i { font-style: normal; }

.menubar { height: 31px; display: flex; align-items: center; gap: 21.5px; padding-left: 8px; color: #222; font-size: 18px; letter-spacing: .25px; }

.toolbar { height: 64px; background: #f5f5f5; display: flex; align-items: center; }
.tg { height: 46px; display: flex; align-items: center; border-right: 1px solid #d5d5d5; flex: none; }
.g1 { width: 70px; padding-left: 21px; }
.g2 { width: 341px; padding-left: 7px; }
.g3 { width: 192px; padding-left: 6px; }
.g4 { width: 169px; padding-left: 7px; }
.g5 { width: 429px; padding-left: 7px; }
.g6 { width: 132px; padding-left: 8px; }
.g7 { width: 100px; border-right: 0; padding-left: 9px; }
.ti { width: 50px; display: flex; justify-content: center; align-items: center; flex: none; }
.ti svg { transform: scale(.82); }
.ti48 { width: 48px; }
.dd { flex: none; display: flex; justify-content: center; align-items: center; height: 10px; }
.dd::before { content: ""; border: 4px solid transparent; border-top: 5px solid #555; border-bottom: 0; }
.dd.off::before { border-top-color: #bbb; }
.dd8 { width: 8px; } .dd10 { width: 10px; } .dd12 { width: 12px; } .dd14 { width: 14px; }
.tbtn { width: 47px; height: 47px; margin-left: 6px; background: #e4e4e4; display: flex; justify-content: center; align-items: center; flex: none; }
.tpin { width: 47px; display: flex; justify-content: center; flex: none; }
.tselect { width: 161px; height: 35px; margin-left: 16px; border: 2px solid #e2e2e2; border-radius: 3px; display: flex; justify-content: flex-end; align-items: center; padding-right: 10px; flex: none; }
.showtab { width: 133px; height: 57px; margin-left: auto; align-self: flex-end; background: #fafafa; border: 1px solid #e3e3e3; border-width: 1px 0 0 2px; display: flex; align-items: center; gap: 7px; padding-left: 15px; flex: none; white-space: nowrap; font-size: 22px; color: #333; overflow: hidden; }

.main { height: 1087px; display: flex; background: #fafafa; position: relative; }

.left { width: 331px; background: #fff; border-right: 2px solid #e6e6e6; flex: none; }
.tabs { height: 41px; display: flex; }
.tab { display: flex; align-items: center; font-size: 22px; }
.tab-on { width: 121px; padding-left: 26px; font-weight: 700; color: #222; }
.tab-off { flex: 1; padding-left: 20px; background: #f5f5f5; border-left: 2px solid #ddd; border-bottom: 2px solid #ddd; color: #444; justify-content: space-between; padding-right: 10px; }
.source { height: 47px; display: flex; align-items: center; gap: 6px; padding-left: 31px; border-bottom: 2px solid #eee; color: #555; }
.searchrow { height: 35px; margin-top: 12px; display: flex; align-items: center; padding-left: 11px; }
.search { width: 226px; height: 35px; border: 2px solid #e4e4e4; display: flex; align-items: center; justify-content: space-between; padding: 0 9px; color: #aaa; flex: none; }
.funnel { margin-left: 5px; }
.vsep { width: 1px; height: 30px; background: #ddd; margin: 0 8px; }
.gridic { flex: none; }
.ddg { width: 0; height: 0; border: 4px solid transparent; border-top: 5px solid #555; border-bottom: 0; margin-left: 10px; }
.tables { font-size: 23px; font-weight: 700; color: #222; padding-left: 26px; height: 26px; line-height: 26px; margin-top: 12px; }
.group { height: 34px; display: flex; align-items: center; gap: 11px; padding-left: 10px; margin-top: 7px; color: #222; }
.group b { margin-left: 6px; }
.g-second { margin-top: 12px; }
.field { height: 33px; display: flex; align-items: center; color: #444; padding-left: 50px; white-space: nowrap; font-size: 19.5px; }
.field .ic { width: 24px; margin-right: 10px; text-align: center; color: #6f9dbb; flex: none; font-size: 21px; display: flex; justify-content: center; font-style: normal; }
.ic.abc { font-size: 12px; font-weight: 700; color: #4e80a3; }
.field .ic.abc { font-size: 12px; }
.ic.grn { color: #4fae84; }
.field .ic.grn { color: #4fae84; }
.em { font-style: italic; font-size: 20.5px; }
.rule { border: 0; height: 2px; background: #e9e9e9; margin: 0 0 1px 43px; }
.mfield { padding-left: 25px; font-size: 20.5px; }
.mfield .ic { margin-right: 12px; }
.mfirst { margin-top: 14px; }
.rule-m { margin-left: 0; margin-bottom: 1px; }
.bang { color: #d33; margin-left: 36px; font-style: normal; }

.cards { width: 247px; margin: 0 8px 0 7px; display: flex; flex-direction: column; flex: none; padding-top: 1px; }
.card { border: 2px solid #e4e4e4; background: #fafafa; padding: 0 8px; flex: none; }
.card h3 { font-size: 20px; font-weight: 400; color: #555; }
.pages { height: 87px; } .pages h3 { padding-top: 8px; }
.filters { height: 116px; margin-top: 10px; } .filters h3 { padding-top: 9px; }
.marks { height: 399px; margin-top: 8px; } .marks h3 { padding-top: 9px; }
.marktype { height: 31px; margin-top: 19px; border: 2px solid #e4e4e4; background: #fff; display: flex; align-items: center; gap: 6px; padding-left: 14px; color: #555; font-size: 17.5px; }
.marktype .ddg { margin-left: auto; margin-right: 7px; }
.mbtns { display: grid; grid-template-columns: 69px 71px 69px; column-gap: 9px; row-gap: 10px; margin-top: 9px; }
.mbtn { height: 65px; border: 2px solid #e4e4e4; background: #fdfdfd; display: flex; flex-direction: column; align-items: center; justify-content: space-between; padding: 8px 0 0; color: #444; font-size: 17.5px; }
.mpills { margin-top: 13px; display: flex; flex-direction: column; gap: 3px; }
.mrow { display: flex; align-items: center; gap: 7px; padding-left: 15px; }
.mrow svg { flex: none; }
.pill { display: flex; align-items: center; height: 31px; border-radius: 16px; color: #e8f5ef; padding-left: 17px; white-space: nowrap; flex: none; }
.green { background: #4fae84; }
.blue { background: #5b93b3; }
.mrow .pill { width: 180px; font-size: 20.5px; }

.work { flex: 1; display: flex; flex-direction: column; padding-top: 1px; min-width: 0; margin-right: 225px; }
.shelf { height: 39px; margin-bottom: 9px; flex: none; border: 2px solid #e4e4e4; border-right: 0; background: #f8f8f8; display: flex; align-items: center; }
.shelf-l { width: 202px; height: 100%; padding-left: 9px; display: flex; align-items: center; gap: 8px; color: #555; border-right: 2px solid #e4e4e4; flex: none; }
.shelfpill { width: 229px; font-size: 20px; margin-left: -1px; padding-left: 18px; }
.view { height: 991px; border: 2px solid #bbb; border-bottom-color: #ccc; background: #fff; position: relative; flex: none; }
.view h1 { height: 64px; line-height: 71px; padding-left: 13px; font-size: 32.5px; font-weight: 300; color: #555; }
.map { position: absolute; left: 8px; top: 64px; width: 610px; height: 916px; }
.mapsvg { display: block; }
.land { filter: blur(1.2px); }
.blotch { filter: blur(6px); }
.nums { font-size: 21px; fill: #333; }
.mapctl { position: absolute; left: 12px; top: 13px; width: 35px; display: flex; flex-direction: column; gap: 12px; }
.ctl { border: 2px solid #c9c9c9; background: #f5f5f5; display: flex; flex-direction: column; align-items: center; }
.ctl-s { height: 35px; justify-content: center; }
.ctl-z { height: 140px; justify-content: space-between; padding: 12px 0 8px; }
.ctlrule { width: 25px; height: 1px; background: #ccc; }
.attr { position: absolute; left: 0; bottom: 1px; padding: 3px 4px 3px 6px; background: rgba(255,255,255,.75); font-family: "Liberation Sans", sans-serif; font-size: 16.5px; color: #555; }
.tooltip { position: absolute; left: 410px; top: 565px; width: 324px; height: 115px; background: #fff; border: 1px solid #ddd; box-shadow: 2px 3px 5px rgba(0,0,0,.3); display: grid; grid-template-columns: 231px auto; grid-auto-rows: 31px; align-content: center; padding: 3px 0 0 12px; font-size: 22px; color: #888; white-space: nowrap; }
.tooltip b { font-weight: 400; color: #333; }

.showme { position: absolute; left: 2111px; top: 0; width: 291px; height: 867px; background: #f9f9f9; border-left: 2px solid #e4e4e4; box-shadow: 0 3px 6px rgba(0,0,0,.35); overflow: hidden; z-index: 2; padding: 23px 0 0 19px; }
.thumbs { display: grid; grid-template-columns: repeat(3, 87px); grid-auto-rows: 65px; column-gap: 9px; row-gap: 7.67px; width: 285px; }
.th { background: #fff; border: 2px solid #eee; }
.th svg { display: block; width: 100%; height: 100%; }
.th-on { border: 3px solid #d9773f; border-radius: 2px; }
.tt { font-size: 5.500px; }
.hint { margin-top: 26px; padding-left: 2px; font-size: 20px; color: #333; }
.h1 { height: 24px; line-height: 24px; }
.hint b { color: #222; }
.hrow { display: flex; align-items: center; gap: 5px; height: 31px; margin-top: 12px; white-space: nowrap; font-size: 19.5px; }
.h1 + .hrow { margin-top: 14px; }
.hrow svg { margin-left: 6px; }
.hp { justify-content: center; padding: 0; font-size: 20.5px; }
.hp1 { width: 134px; margin-left: -1px; }
.hp2 { width: 144px; margin-left: -1px; }
.hp3 { width: 124px; margin-left: -1px; }
.note { margin-top: 17px; color: #999; line-height: 24px; }
.foot { height: 10px; background: #f5f5f5; border-top: 2px solid #ddd; }
```
